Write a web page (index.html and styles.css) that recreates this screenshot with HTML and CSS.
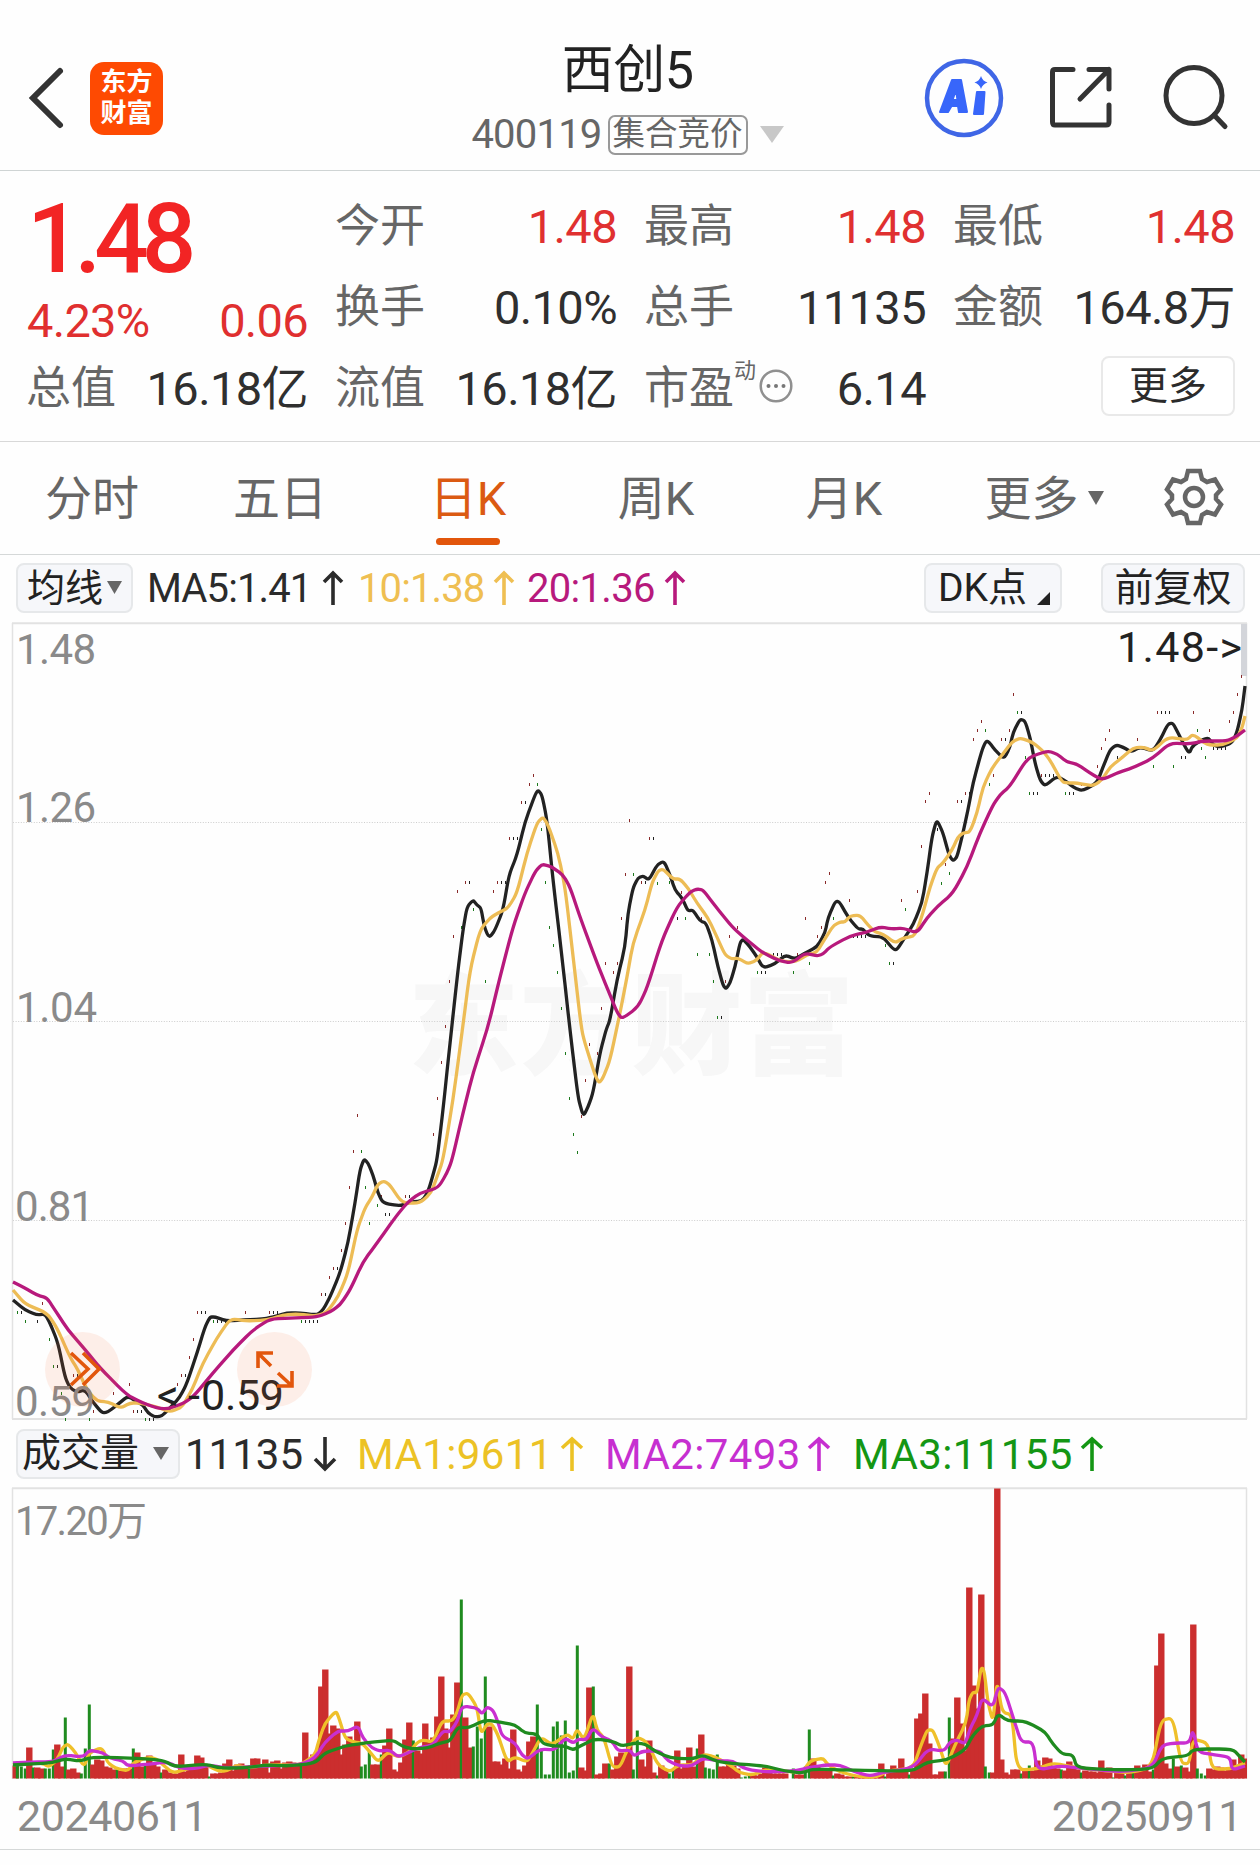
FILE: index.html
```html
<!DOCTYPE html>
<html lang="zh-CN">
<head>
    <meta charset="utf-8">
    <title>西创5 400119</title>
    <link rel="stylesheet" href="styles.css">
</head>

<body>

    <div class="header">
        <div class="header-left">
            <svg class="back" width="40" height="64" viewBox="0 0 40 64"><path d="M33 5 L6 32 L33 59" /></svg>
            <div class="logo">东方<br>财富</div>
        </div>
        <div class="header-title">
            <h1>西创5</h1>
            <div class="sub-title">
                <span class="code">400119</span>
                <span class="tag">集合竞价</span>
                <svg width="24" height="17" viewBox="0 0 24 17"><path d="M0 0 H24 L12 17 Z" fill="#c8c8c8" /></svg>
            </div>
        </div>
        <div class="header-right">
            <svg width="80" height="80" viewBox="0 0 80 80">
                <circle cx="40" cy="40" r="37" fill="none" stroke="#3f66e6" stroke-width="4.5" />
                <path fill="#3866fa" fill-rule="evenodd" stroke="#3866fa" stroke-width="2" stroke-linejoin="round" d="M28 22 H37 L43 54 H35 L34 48 H27.500 L24 54 H16 Z M32 32 L28.500 42 H33.500 Z" />
                <path fill="#3866fa" stroke="#3866fa" stroke-width="2" stroke-linejoin="round" d="M53 34 H60.500 L59 56 H50 Z" />
                <path fill="#3866fa" d="M57 18 Q58.500 23 63.500 24.500 Q58.500 26 57 31 Q55.500 26 50.500 24.500 Q55.500 23 57 18 Z" />
            </svg>
            <svg class="line-icon share" width="66" height="66" viewBox="0 0 66 66">
                <path d="M25 4.500 H7 Q4.500 4.500 4.500 7 V57 Q4.500 60 7 60 H58 Q61 60 61 57 V40" />
                <path d="M41 4.500 H61 V24 M61 4.500 L32 34" />
            </svg>
            <svg class="line-icon" width="68" height="68" viewBox="0 0 68 68">
                <circle cx="32" cy="31.500" r="28" />
                <path d="M52 51 L63 62.500" />
            </svg>
        </div>
    </div>

    <div class="quote">
        <div class="price-box">
            <div class="price">1.48</div>
            <div class="change"><span>4.23%</span><span>0.06</span></div>
        </div>
        <div class="item"><label>今开</label><b class="up">1.48</b></div>
        <div class="item"><label>最高</label><b class="up">1.48</b></div>
        <div class="item"><label>最低</label><b class="up">1.48</b></div>
        <div class="item"><label>换手</label><b>0.10%</b></div>
        <div class="item"><label>总手</label><b>11135</b></div>
        <div class="item"><label>金额</label><b>164.8万</b></div>
        <div class="item"><label>总值</label><b>16.18亿</b></div>
        <div class="item"><label>流值</label><b>16.18亿</b></div>
        <div class="item">
            <label class="pe">市盈<sup>动</sup>
                <svg width="34" height="34" viewBox="0 0 34 34">
                    <circle cx="17" cy="17" r="15.300" fill="none" stroke="#909090" stroke-width="2.500" />
                    <g fill="#777"><circle cx="9.500" cy="17" r="2" /><circle cx="17" cy="17" r="2" /><circle cx="24.500" cy="17" r="2" /></g>
                </svg>
            </label>
            <b>6.14</b>
        </div>
        <div class="item end"><button class="more">更多</button></div>
    </div>

    <div class="tabs">
        <a>分时</a>
        <a>五日</a>
        <a class="active">日K</a>
        <a>周K</a>
        <a>月K</a>
        <a class="tab-more">更多<svg width="16" height="14" viewBox="0 0 16 14"><path d="M0 0 H16 L8 14 Z" fill="#666" /></svg></a>
        <svg class="gear" width="58" height="58" viewBox="0 0 58 58">
            <path d="M23 3 H35 L37 11 L42 14 L50 11.500 L56 21.500 L51 27 V31 L56 36.500 L50 46.500 L42 44 L37 47 L35 55 H23 L21 47 L16 44 L8 46.500 L2 36.500 L7 31 V27 L2 21.500 L8 11.500 L16 14 L21 11 Z" />
            <circle cx="29" cy="29" r="9" />
        </svg>
    </div>

    <div class="ma-bar">
        <button class="btn btn-ma">均线<svg width="15" height="13" viewBox="0 0 15 13"><path d="M0 0 H15 L7.500 13 Z" fill="#666" /></svg></button>
        <span class="ma ma5">MA5:1.41<svg class="arrow" width="22" height="36" viewBox="0 0 22 36"><path d="M11 35 V3 M2 12 L11 3 L20 12" /></svg></span>
        <span class="ma ma10">10:1.38<svg class="arrow" width="22" height="36" viewBox="0 0 22 36"><path d="M11 35 V3 M2 12 L11 3 L20 12" /></svg></span>
        <span class="ma ma20">20:1.36<svg class="arrow" width="22" height="36" viewBox="0 0 22 36"><path d="M11 35 V3 M2 12 L11 3 L20 12" /></svg></span>
        <button class="btn btn-dk">DK点<svg width="13" height="13" viewBox="0 0 13 13"><path d="M13 0 V13 H0 Z" fill="#222" /></svg></button>
        <button class="btn btn-fq">前复权</button>
    </div>

    <svg class="chart" id="kline" width="1260" height="802" viewBox="0 622 1260 802">
        <text class="watermark" x="408" y="1066" textLength="446">东方财富</text>
        <path class="grid" d="M13 822.500 H1247 M13 1021.500 H1247 M13 1220.500 H1247" />
        <path class="frame" d="M12.500 623 V1419 M1246.500 623 V1419" />
        <path class="frame bold" d="M12 623.200 H1247 M12 1419 H1247" />
        <rect x="1241" y="624" width="6" height="52" fill="#d3d5da" />
        <g id="dots"></g>
        <g id="lines"></g>
        <text class="mark" x="1117" y="662" textLength="125">1.48-&gt;</text>
        <text class="mark" x="157" y="1410" textLength="43">&lt;-</text>
        <text class="mark" x="201" y="1410" textLength="83">0.59</text>
        <text class="axis" x="16" y="664" textLength="80">1.48</text>
        <text class="axis" x="16" y="822" textLength="80">1.26</text>
        <text class="axis" x="16" y="1022" textLength="81">1.04</text>
        <text class="axis" x="15" y="1221" textLength="79">0.81</text>
        <text class="axis" x="15" y="1416" textLength="80">0.59</text>
        <g class="float">
            <circle cx="82.500" cy="1369.500" r="37.500" />
            <path d="M71 1353 L88 1369 L71 1385 M83 1353 L99 1369 L83 1385" />
            <circle cx="274.500" cy="1369.500" r="37.500" />
            <path d="M273 1353 H258 V1368 M258 1353 L271 1366 M277 1386 H292 V1371 M292 1386 L278 1373" />
        </g>
    </svg>

    <div class="vol-bar">
        <button class="btn btn-vol">成交量<svg width="16" height="13" viewBox="0 0 16 13"><path d="M0 0 H16 L8 13 Z" fill="#666" /></svg></button>
        <span class="ma v0">11135<svg class="arrow" width="22" height="36" viewBox="0 0 22 36"><path d="M11 1 V33 M1 23 L11 33 L21 23" /></svg></span>
        <span class="ma v1">MA1:9611<svg class="arrow" width="22" height="36" viewBox="0 0 22 36"><path d="M11 35 V3 M1 12 L11 3 L21 12" /></svg></span>
        <span class="ma v2">MA2:7493<svg class="arrow" width="22" height="36" viewBox="0 0 22 36"><path d="M11 35 V3 M1 12 L11 3 L21 12" /></svg></span>
        <span class="ma v3">MA3:11155<svg class="arrow" width="22" height="36" viewBox="0 0 22 36"><path d="M11 35 V3 M1 12 L11 3 L21 12" /></svg></span>
    </div>

    <svg class="chart" id="volume" width="1260" height="296" viewBox="0 1486 1260 296">
        <path class="frame" d="M12.500 1488 V1779 M1246.500 1488 V1779" />
        <path class="frame bold" d="M12 1488.200 H1247" />
        <text class="axis vol-max" x="15" y="1535" textLength="132">17.20万</text>
        <g id="bars"></g>
        <g id="volLines"></g>
    </svg>

    <div class="dates"><span>20240611</span><span>20250911</span></div>

    <script src="chart.js"></script>
</body>
</html>
```
FILE: styles.css
```css
body {
    margin: 0;
    width: 1260px;
    height: 1865px;
    overflow: hidden;
    background-color: #fefefe;
    color: #2b2b2b;
    font-family: Roboto, "Noto Sans CJK SC", sans-serif;
}

svg {
    display: block;
    flex-shrink: 0;
    overflow: visible;
}

button {
    font-family: inherit;
    color: inherit;
    padding: 0;
    margin: 0;
    box-sizing: border-box;
}

.header {
    display: grid;
    grid-template-columns: 1fr auto 1fr;
    box-sizing: border-box;
    height: 171px;
    padding: 0 27px;
    border-bottom: 1px solid #cfd4d4;
}

.header-left {
    display: flex;
    align-items: center;
    padding-top: 26px;
}

.back {
    margin-right: 23px;
}

.back path {
    fill: none;
    stroke: #333;
    stroke-width: 6;
    stroke-linecap: round;
}

.logo {
    width: 73px;
    height: 73px;
    box-sizing: border-box;
    padding-top: 5px;
    border-radius: 14px;
    background-color: #fe4a02;
    color: #fff;
    font-size: 26px;
    font-weight: 700;
    line-height: 31px;
    text-align: center;
}

.header-title {
    width: 330px;
    padding: 37px 5px 0 0;
}

.header-title h1 {
    margin: 0;
    font-size: 52px;
    font-weight: 400;
    line-height: 67px;
    letter-spacing: -0.5px;
    text-align: center;
    color: #222;
}

.sub-title {
    display: flex;
    align-items: center;
    justify-content: center;
    height: 61px;
    color: #666;
}

.code {
    font-size: 40px;
    letter-spacing: -0.8px;
}

.tag {
    box-sizing: border-box;
    height: 40px;
    margin: 0 12px 0 6px;
    padding: 0 3px;
    border: 2px solid #999;
    border-radius: 7px;
    font-size: 32.5px;
    line-height: 35px;
}

.header-right {
    display: flex;
    align-items: center;
    justify-content: flex-end;
    padding: 26px 3px 0 0;
}

.line-icon {
    margin-left: 48px;
    fill: none;
    stroke: #333;
    stroke-width: 5;
    stroke-linecap: round;
    stroke-linejoin: round;
}

.share {
    margin-left: 44px;
}

.quote {
    display: grid;
    grid-template-columns: repeat(4, 281px);
    grid-template-rows: repeat(3, 81px);
    column-gap: 28px;
    height: 271px;
    box-sizing: border-box;
    padding: 16px 27px 0;
    border-bottom: 1px solid #d8d8d8;
}

.price-box {
    grid-row: span 2;
    color: #e02f2f;
}

.price {
    height: 92px;
    font-size: 96px;
    font-weight: 500;
    line-height: 105px;
    letter-spacing: -7px;
    color: #f22424;
}

.change {
    display: flex;
    justify-content: space-between;
    font-size: 47px;
    line-height: 84px;
    letter-spacing: -0.7px;
}

.item {
    display: flex;
    align-items: center;
    justify-content: space-between;
    font-size: 47px;
    line-height: 56px;
    white-space: nowrap;
}

.item label {
    margin: -2px 0 0 -1px;
    font-size: 45px;
    color: #666;
}

.item b {
    margin-top: -2px;
    font-weight: 400;
    letter-spacing: -0.6px;
    color: #2f2f2f;
}

.item .up {
    color: #e03030;
}

.pe {
    display: flex;
    align-items: center;
}

.pe sup {
    align-self: flex-start;
    font-size: 22px;
    line-height: 20px;
    vertical-align: baseline;
}

.pe svg {
    margin: -5px 0 0 3px;
}

.item.end {
    justify-content: flex-end;
}

.more {
    width: 134px;
    height: 60px;
    margin-top: -7px;
    border: 2px solid #e9e9e9;
    border-radius: 8px;
    background-color: #fff;
    font-size: 39px;
    line-height: 50px;
}

.tabs {
    display: flex;
    height: 112px;
    border-bottom: 1px solid #d5d8d8;
    font-size: 47px;
    line-height: 114px;
    color: #666;
}

.tabs a {
    width: 188px;
    margin-left: -2px;
    margin-right: 2px;
    text-align: center;
}

.tabs .active {
    display: flex;
    flex-direction: column;
    align-items: center;
    color: #db5a12;
}

.tabs .active::after {
    content: "";
    width: 64px;
    height: 7px;
    margin-top: -18px;
    border-radius: 4px;
    background-color: #e2560c;
}

.tabs .tab-more {
    display: flex;
    justify-content: center;
    gap: 9px;
    width: 212px;
}

.tab-more svg {
    margin-top: 49px;
}

.gear {
    align-self: center;
    margin: 0 0 2px 13px;
    fill: none;
    stroke: #666;
    stroke-width: 4.5;
}

.ma-bar, .vol-bar {
    display: flex;
    align-items: center;
    box-sizing: border-box;
    padding: 0 15px 0 16px;
}

.ma-bar {
    height: 67px;
    font-size: 40px;
    padding-bottom: 1px;
}

.vol-bar {
    height: 62px;
    font-size: 42px;
    padding-bottom: 2px;
}

.btn {
    display: flex;
    align-items: center;
    justify-content: center;
    height: 50px;
    padding-bottom: 1px;
    border: 2px solid #e6e8ea;
    border-radius: 8px;
    background-color: #f6f7fa;
    font-size: 39px;
    line-height: 46px;
    color: #222;
}

.btn-ma {
    width: 117px;
    font-size: 38px;
    gap: 4px;
}

.btn-dk {
    width: 138px;
    margin-left: auto;
    padding-left: 2px;
    gap: 10px;
}

.btn-dk svg {
    align-self: flex-end;
    margin-bottom: 5px;
}

.btn-fq {
    width: 144px;
    margin-left: 39px;
}

.btn-vol {
    width: 164px;
    padding: 0 5px 2px 0;
    gap: 14px;
}

.ma {
    display: flex;
    align-items: center;
    justify-content: space-between;
    white-space: nowrap;
    letter-spacing: -0.9px;
}

.arrow path {
    fill: none;
    stroke: currentColor;
    stroke-width: 3.6;
}

.ma5 {
    width: 197px;
    margin-left: 14px;
}

.ma10 {
    width: 157px;
    margin-left: 14px;
    color: #efbf52;
}

.ma20 {
    width: 159px;
    margin-left: 12px;
    letter-spacing: -0.7px;
    color: #b7197c;
}

.vol-bar .ma {
    letter-spacing: 0.4px;
}

.vol-bar .v0 {
    width: 151px;
    margin-left: 5px;
    letter-spacing: 0;
}

.vol-bar .v1 {
    width: 226px;
    margin-left: 21px;
    color: #ecc225;
}

.vol-bar .v2 {
    width: 225px;
    margin-left: 22px;
    color: #c62fd0;
}

.vol-bar .v3 {
    width: 250px;
    margin-left: 23px;
    color: #149614;
}

.watermark {
    font-size: 111px;
    font-weight: 900;
    fill: #f7f7f7;
}

.grid {
    fill: none;
    stroke: #cdcdcd;
    stroke-dasharray: 1 1.6;
}

.frame {
    fill: none;
    stroke: #e2e2e2;
    stroke-width: 1.5;
}

.frame.bold {
    stroke-width: 2;
}

.axis {
    font-size: 42px;
    fill: #8a8a8a;
}

.vol-max {
    font-size: 40px;
}

.mark {
    font-size: 43px;
    fill: #222;
}

.line {
    fill: none;
    stroke-width: 3.3;
    stroke-linejoin: round;
}

.float circle {
    fill: #f9713a;
    fill-opacity: 0.11;
}

.float path {
    fill: none;
    stroke: #e2560c;
    stroke-width: 3.6;
}

.dates {
    display: flex;
    justify-content: space-between;
    height: 67px;
    padding: 0 18px 0 17px;
    border-bottom: 1px solid #d5d8d8;
    font-size: 43px;
    line-height: 68px;
    letter-spacing: -0.4px;
    color: #8a8a8a;
}
```
FILE: chart.js
```js
// moving averages of the price, x y pairs
var ma5 = "13 1300 25 1310 37 1315 45 1314 50 1323 58 1343 65 1377 70 1388 77 1392 85 1390 93 1402 102 1413 108 1412 117 1405 128 1396 137 1402 143 1405 148 1413 155 1417 162 1416 170 1408 180 1397 187 1383 197 1353 205 1327 210 1317 215 1317 227 1321 243 1320 263 1319 273 1317 287 1313 300 1313 317 1315 323 1310 330 1297 340 1273 348 1243 355 1203 360 1170 364 1159 368 1163 373 1175 378 1193 383 1203 400 1206 410 1202 422 1201 428 1192 433 1175 437 1160 443 1110 450 1043 458 970 463 930 467 907 473 900 477 905 481 908 484 925 487 934 490 937 495 930 503 910 509 875 517 855 525 822 535 795 538 790 542 795 547 820 553 880 562 957 570 1030 578 1097 582 1112 584 1115 588 1107 593 1093 600 1053 606 1030 610 1020 617 980 625 947 628 913 633 888 638 878 643 876 649 880 657 865 664 861 670 875 675 890 682 898 688 911 693 910 700 921 706 923 712 940 718 967 723 985 726 989 730 983 735 967 740 943 743 939 750 947 757 957 763 968 775 964 785 955 795 959 805 953 817 947 825 933 828 918 835 902 839 901 848 917 858 929 863 929 869 936 883 937 893 949 897 950 905 937 913 925 922 903 927 873 932 837 936 822 938 822 943 833 949 855 953 861 957 857 962 837 968 810 973 783 982 750 986 741 989 742 995 750 1004 759 1010 747 1013 733 1020 719 1025 721 1030 737 1035 763 1040 780 1045 786 1057 776 1067 782 1073 787 1082 791 1097 783 1103 767 1110 750 1116 745 1123 747 1131 752 1140 747 1153 751 1160 740 1168 724 1173 723 1180 737 1189 754 1193 745 1208 737 1213 745 1220 747 1232 743 1237 732 1242 710 1245 686";
var ma10 = "13 1290 25 1304 47 1313 57 1328 70 1357 78 1370 87 1390 97 1401 108 1402 121 1408 130 1403 140 1403 157 1407 170 1412 182 1407 192 1390 203 1363 217 1338 228 1322 233 1319 247 1321 267 1320 283 1315 297 1314 317 1316 327 1312 338 1297 348 1273 357 1230 365 1208 372 1197 378 1184 384 1181 390 1185 402 1203 420 1203 431 1193 437 1177 443 1160 453 1100 462 1033 470 970 480 930 490 918 498 913 508 908 517 893 527 853 537 823 543 817 548 825 558 853 565 887 572 947 580 1017 583 1037 595 1075 599 1083 603 1078 610 1060 620 1013 627 977 633 943 645 910 652 883 658 871 663 869 673 879 680 879 688 888 697 903 708 918 717 937 725 955 732 959 738 958 748 964 757 960 762 953 768 954 780 961 795 962 807 955 817 952 823 942 833 926 840 922 845 922 850 916 860 915 868 925 875 932 883 934 895 943 903 938 915 936 923 913 930 887 937 868 943 863 952 850 958 837 963 833 970 832 977 813 983 787 992 768 1002 755 1012 742 1020 738 1032 742 1042 750 1050 760 1062 782 1068 783 1077 783 1093 786 1102 780 1110 767 1123 757 1133 748 1143 747 1153 751 1168 737 1187 740 1193 734 1207 745 1223 745 1237 738 1242 728 1245 716";
var ma20 = "13 1282 23 1287 37 1295 47 1298 55 1310 68 1330 83 1347 100 1368 127 1395 143 1403 157 1408 167 1409 182 1404 193 1397 213 1373 233 1350 253 1330 270 1319 293 1318 317 1317 330 1312 340 1305 350 1290 363 1262 377 1243 397 1215 408 1202 420 1193 438 1188 447 1173 452 1160 463 1113 473 1073 488 1027 500 977 513 927 525 893 535 872 542 864 552 867 563 875 570 887 580 917 597 963 610 995 617 1012 622 1019 638 1007 647 988 662 940 677 907 690 892 697 889 703 890 713 903 732 927 747 940 763 953 780 961 792 963 805 953 817 956 823 954 830 947 850 936 867 932 880 927 893 929 903 928 917 933 927 918 937 907 953 893 967 867 980 833 993 805 1000 795 1010 786 1025 762 1032 756 1048 751 1057 754 1067 762 1077 764 1090 773 1102 780 1117 773 1135 767 1153 758 1170 743 1190 744 1203 741 1227 741 1237 736 1245 730";

// daily ticks: r = up, g = down, k = flat
var dots = {
    r: "42 1303 73 1375 93 1411 113 1393 129 1384 133 1411 177 1384 181 1375 189 1357 193 1339 197 1312 245 1312 269 1312 321 1294 329 1277 333 1268 341 1250 345 1223 349 1187 353 1151 357 1115 381 1196 405 1196 433 1134 437 1098 441 1062 445 1026 449 981 453 936 457 891 465 882 493 891 497 882 509 838 521 802 529 784 533 775 581 1116 585 1080 589 1044 597 1053 601 1008 605 963 613 972 617 963 621 918 625 874 629 820 641 882 649 838 681 892 701 918 725 981 729 936 737 927 797 954 805 918 817 936 821 927 825 882 829 873 849 900 901 900 917 891 921 846 925 801 929 793 945 864 957 801 965 793 973 739 977 730 981 721 993 775 1001 739 1009 730 1013 694 1041 775 1081 784 1097 766 1101 748 1105 739 1109 730 1137 739 1157 712 1193 712 1209 730 1229 721 1233 712 1237 694 1241 676",
    g: "17 1312 25 1321 49 1339 53 1366 61 1393 65 1419 89 1419 145 1419 213 1321 301 1321 361 1151 365 1187 369 1223 377 1205 461 927 473 909 485 981 537 784 541 829 545 882 549 927 553 945 557 972 561 1008 565 1053 569 1098 573 1134 577 1152 633 874 657 883 669 882 685 918 697 954 709 954 713 981 717 1017 757 972 793 972 809 963 833 918 885 945 889 963 905 909 941 883 949 873 985 730 989 784 1017 712 1025 757 1029 793 1065 793 1153 766 1173 766 1197 730 1201 748 1205 757",
    k: "21 1312 37 1321 57 1366 77 1375 137 1411 141 1411 149 1419 153 1419 185 1375 201 1312 205 1312 217 1321 221 1321 225 1321 273 1312 277 1312 305 1321 309 1321 313 1321 317 1321 325 1294 337 1268 385 1214 389 1214 409 1196 469 882 501 882 505 882 513 838 517 838 525 802 645 882 653 838 673 882 677 918 721 1017 761 972 765 972 773 954 777 954 781 954 853 936 857 936 861 936 865 936 893 963 937 829 961 801 969 793 1005 739 1021 712 1033 793 1037 793 1045 775 1049 775 1053 775 1057 775 1069 793 1073 793 1117 757 1121 757 1161 712 1165 712 1169 712 1181 757 1185 757 1213 748 1217 748 1221 748 1225 748"
};

// bar heights, one per day, below zero = down day
var volumes = [
    13, -17, -12, -10, 31, -11, 11, 10, -10, -10, -29, 34, 12, -61, 9, 10, 6, -5, -30, -74,
    14, 19, 18, 12, 11, 9, -9, 8, 10, 10, -30, 26, 12, -15, 23, 14, 12, -6, 9, 6,
    5, 5, 24, 7, 9, 9, 23, 21, 14, -2, 5, 5, 6, 15, 19, 8, 14, 15, 12, -13,
    20, 20, 12, 19, 6, 17, 18, 10, 16, 17, 16, 13, -14, 46, 20, 24, 23, 92, 109, 45,
    53, 50, 24, 34, 42, 36, 57, -12, -14, -28, 14, 14, -24, 33, 50, 9, 7, 16, 39, 56,
    -38, 28, 25, 55, 36, 41, 62, 102, 50, 31, 64, 96, -179, 61, 31, -32, -52, -40, -102, 52,
    17, 17, 14, 20, 10, 49, 9, 7, 13, 37, 42, -74, -30, -4, -4, -52, -57, -43, -58, -6,
    -8, -133, 11, 8, 91, -92, 4, 5, 15, -15, 9, 22, 26, 24, 112, -9, -48, 19, 12, 38,
    6, -3, 13, 8, -5, -9, 28, 10, 13, 31, 12, -30, 44, -11, -10, -9, -24, 12, 12, 14,
    13, 10, -1, -2, -3, 4, 3, 5, 11, 6, 5, 5, 5, 5, 0, -10, 4, 4, -12, -49,
    20, 13, 10, 9, 10, -3, 5, 4, 2, 2, -2, 3, 3, 2, -2, 3, 3, 15, -2, 6,
    13, 10, 20, 9, -4, 9, 60, 65, 85, 35, 4, 4, 7, -7, -61, 40, 81, 55, 28, 191,
    93, 70, 184, -12, -6, 6, 290, 19, 6, 4, 9, 9, -5, 8, -13, 8, 18, 13, 21, 20,
    12, 10, -9, 8, 17, 12, 9, -6, 8, 7, 7, 6, 18, 8, 11, -1, 6, 7, -3, 8,
    -6, 13, 8, 14, 7, -9, 113, 145, 15, 10, -20, 12, -13, 11, 7, 154, -10, -5, -3, 10,
    9, 12, 11, 8, 9, 19, 12, 24, 20
];

var volMa1 = "13 1765 25 1763 42 1763 49 1767 57 1760 63 1747 68 1744 75 1752 84 1767 89 1753 100 1748 104 1751 107 1762 115 1768 128 1771 133 1763 148 1757 157 1759 163 1765 173 1773 187 1769 205 1764 218 1771 227 1771 237 1765 247 1768 267 1765 300 1765 315 1755 319 1740 325 1723 336 1711 339 1718 345 1738 353 1742 362 1743 370 1752 378 1762 388 1752 398 1757 408 1753 418 1742 423 1740 433 1742 442 1721 452 1721 457 1713 462 1695 468 1693 477 1707 481 1734 487 1724 492 1724 498 1735 507 1762 515 1757 527 1762 533 1752 541 1737 552 1745 567 1734 573 1739 577 1729 584 1740 593 1713 597 1730 604 1738 612 1767 620 1767 628 1748 637 1737 647 1742 658 1765 670 1772 678 1765 693 1765 703 1754 715 1757 730 1765 740 1773 753 1775 767 1769 802 1773 810 1761 823 1758 828 1765 840 1772 860 1777 877 1777 888 1771 913 1768 920 1748 927 1730 933 1730 940 1748 946 1767 955 1745 966 1723 969 1700 973 1692 977 1693 981 1668 984 1669 988 1703 993 1722 997 1680 1002 1712 1012 1715 1017 1770 1037 1769 1053 1763 1073 1767 1097 1770 1130 1773 1152 1767 1161 1720 1173 1718 1181 1763 1189 1764 1193 1739 1208 1743 1212 1769 1230 1769 1245 1763";
var volMa2 = "13 1763 30 1762 53 1762 65 1755 83 1757 90 1750 103 1753 110 1758 123 1761 128 1766 150 1764 167 1762 180 1768 193 1769 210 1765 225 1768 267 1766 300 1765 315 1758 325 1742 338 1731 348 1731 358 1726 363 1738 372 1748 380 1751 390 1750 398 1757 410 1752 418 1748 433 1745 443 1731 450 1732 457 1722 462 1706 477 1708 482 1714 487 1707 493 1710 498 1722 502 1736 515 1743 522 1755 528 1759 540 1749 555 1750 565 1738 573 1743 579 1739 586 1740 593 1728 602 1737 612 1741 618 1751 630 1750 634 1756 643 1751 660 1751 668 1761 680 1766 692 1766 703 1758 718 1761 733 1761 745 1769 765 1772 795 1771 807 1768 825 1765 840 1765 855 1772 870 1776 885 1772 913 1768 928 1749 944 1751 950 1742 957 1740 965 1744 970 1729 977 1715 982 1698 993 1707 998 1687 1005 1692 1014 1720 1021 1742 1033 1742 1037 1770 1060 1766 1080 1768 1120 1772 1152 1768 1162 1745 1175 1743 1189 1743 1193 1730 1198 1752 1215 1755 1230 1757 1232 1770 1245 1766";
var volMa3 = "13 1765 50 1763 65 1759 80 1761 93 1757 130 1758 163 1760 175 1767 205 1764 220 1768 245 1768 265 1765 290 1766 315 1763 325 1753 345 1746 365 1743 393 1740 402 1746 412 1749 428 1748 440 1743 450 1741 458 1727 468 1728 485 1720 500 1722 515 1725 525 1733 537 1734 543 1744 555 1746 565 1746 573 1750 582 1745 595 1739 612 1741 622 1746 635 1743 645 1744 655 1751 670 1758 692 1759 703 1755 718 1762 740 1764 765 1766 785 1771 803 1773 812 1769 845 1770 900 1771 915 1770 927 1762 947 1760 965 1750 973 1735 982 1726 993 1725 998 1714 1008 1721 1023 1721 1033 1725 1045 1732 1053 1744 1062 1754 1073 1755 1077 1768 1120 1770 1152 1769 1163 1758 1187 1756 1194 1749 1233 1749 1240 1757 1245 1762";

function addShape(parent, name, attrs) {
    let el = document.createElementNS("http://www.w3.org/2000/svg", name);
    for (let key in attrs) {
        el.setAttribute(key, attrs[key]);
    }
    document.getElementById(parent).appendChild(el);
}

// rounds every corner by curving through the segment midpoints
function drawLine(parent, data, color) {
    let v = data.split(" ").map(Number);
    let d = "M" + v[0] + " " + v[1];
    for (let i = 2; i < v.length - 2; i += 2) {
        let ax = v[i] + (v[i - 2] - v[i]) * 0.35, ay = v[i + 1] + (v[i - 1] - v[i + 1]) * 0.35;
        let bx = v[i] + (v[i + 2] - v[i]) * 0.35, by = v[i + 1] + (v[i + 3] - v[i + 1]) * 0.35;
        d += " L" + ax + " " + ay + " Q" + v[i] + " " + v[i + 1] + " " + bx + " " + by;
    }
    d += " L" + v[v.length - 2] + " " + v[v.length - 1];
    addShape(parent, "path", { d: d, stroke: color, "class": "line" });
}

function drawDots(data, color) {
    let v = data.split(" ");
    for (let i = 0; i < v.length; i += 2) {
        addShape("dots", "rect", { x: v[i], y: v[i + 1] - 1, width: 1, height: 3, fill: color });
    }
}

function drawBars() {
    let bottom = 1778.5;
    for (let i = 0; i < volumes.length; i++) {
        let up = volumes[i] > 0;
        let h = Math.abs(volumes[i]);
        let w = up ? 6.4 : 3;
        let x = Math.max(13.3 + i * 4 - w / 2, 12.5);
        addShape("bars", "rect", { x: x, y: bottom - h, width: Math.min(w, 1247 - x), height: h, fill: up ? "#cb2e2e" : "#1f8b1f" });
    }
}

drawDots(dots.r, "#8a2a2a");
drawDots(dots.g, "#1c7a1c");
drawDots(dots.k, "#222");
drawLine("lines", ma5, "#222");
drawLine("lines", ma10, "#edbc55");
drawLine("lines", ma20, "#b7197c");

drawBars();
drawLine("volLines", volMa1, "#efc02a");
drawLine("volLines", volMa2, "#c92fd0");
drawLine("volLines", volMa3, "#1f8b1f");
```
